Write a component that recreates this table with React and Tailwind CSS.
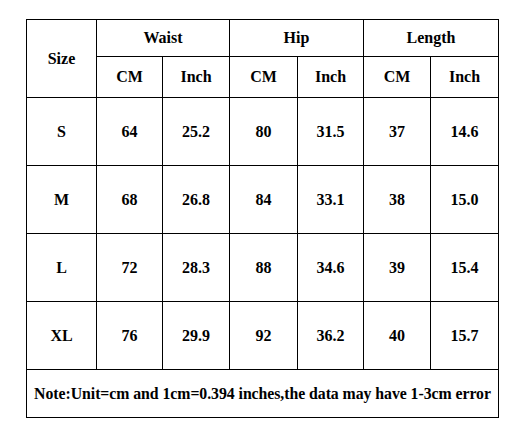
import React from "react";

const rows = [
  ["S", "64", "25.2", "80", "31.5", "37", "14.6"],
  ["M", "68", "26.8", "84", "33.1", "38", "15.0"],
  ["L", "72", "28.3", "88", "34.6", "39", "15.4"],
  ["XL", "76", "29.9", "92", "36.2", "40", "15.7"],
];

const cell = "border border-black text-center align-middle p-0";

export default function App() {
  return (
    <div
      className="w-[527px] h-[439px] bg-white pl-[26px] pt-[19px] text-black font-bold text-[16px]"
      style={{ fontFamily: '"Liberation Serif", "Times New Roman", serif' }}
    >
      <table className="table-fixed border-collapse w-[472px]">
        <colgroup>
          <col className="w-[70px]" />
          <col className="w-[66px]" />
          <col className="w-[67px]" />
          <col className="w-[68px]" />
          <col className="w-[66px]" />
          <col className="w-[67px]" />
          <col className="w-[68px]" />
        </colgroup>
        <thead>
          <tr className="h-[37px]">
            <th rowSpan={2} className={cell}>Size</th>
            <th colSpan={2} className={cell}>Waist</th>
            <th colSpan={2} className={cell}>Hip</th>
            <th colSpan={2} className={cell}>Length</th>
          </tr>
          <tr className="h-[41px]">
            <th className={cell}>CM</th>
            <th className={cell}>Inch</th>
            <th className={cell}>CM</th>
            <th className={cell}>Inch</th>
            <th className={cell}>CM</th>
            <th className={cell}>Inch</th>
          </tr>
        </thead>
        <tbody>
          {rows.map((r) => (
            <tr key={r[0]} className="h-[68px]">
              {r.map((v, i) => (
                <td key={i} className={cell}>{v}</td>
              ))}
            </tr>
          ))}
          <tr className="h-[48px]">
            <td colSpan={7} className={cell + " whitespace-nowrap text-[15.8px] tracking-[-0.05px]"}>
              Note:Unit=cm and 1cm=0.394 inches,the data may have 1-3cm error
            </td>
          </tr>
        </tbody>
      </table>
    </div>
  );
}
